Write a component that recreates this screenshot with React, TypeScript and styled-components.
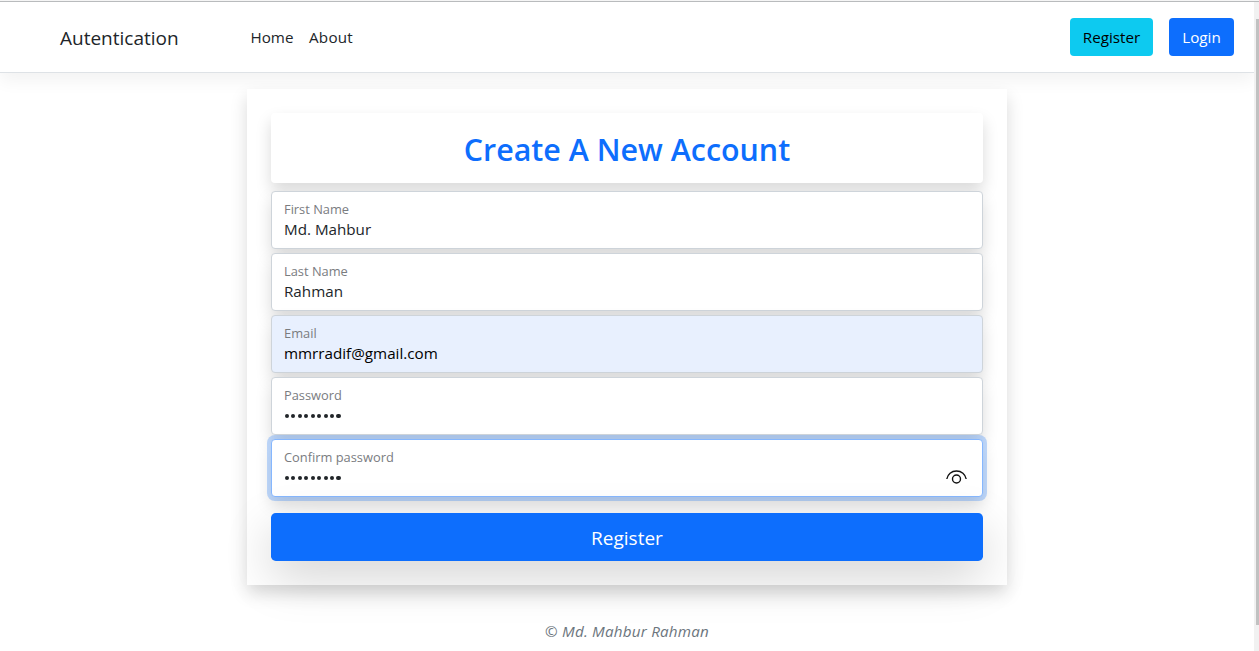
import React from "react";
import styled, { createGlobalStyle } from "styled-components";

const GlobalStyle = createGlobalStyle`
  *, *::before, *::after { box-sizing: border-box; }
  html, body { margin: 0; height: 100%; overflow: hidden; }
  body {
    font-family: "Segoe UI", "Open Sans", "Noto Sans", sans-serif;
    font-size: 15.2px;
    line-height: 24px;
    color: #212529;
    background: #fff;
  }
`;

const Window = styled.div`
  display: flex;
  height: 651px;
  border-top: 1px solid #f5f5f5;
`;

const Viewport = styled.div`
  display: flex;
  flex: 1;
  border-top: 1px solid #b9bbbd;
`;

const Page = styled.div`
  flex: 1;
  overflow: hidden;
`;

const ScrollTrack = styled.div`
  width: 5px;
  padding: 17px 0 0 2px;
  background: #f1f1f1;
`;

const ScrollThumb = styled.div`
  height: 606px;
  background: #c1c1c1;
`;

const Navbar = styled.header`
  display: flex;
  align-items: center;
  height: 71px;
  padding: 0 20px 0 60px;
  background: #fff;
  border-bottom: 1px solid #dee2e6;
  box-shadow: 0 8px 16px rgba(0, 0, 0, 0.05);
`;

const Brand = styled.a`
  width: 190.5px;
  padding-top: 2px;
  font-size: 19px;
  line-height: 30px;
`;

const NavLinks = styled.nav`
  display: flex;
  flex: 1;
  gap: 16px;
`;

const NavLink = styled.a<{ $width: number; $spacing?: number }>`
  width: ${(p) => p.$width}px;
  letter-spacing: ${(p) => p.$spacing ?? 0}px;
  white-space: nowrap;
`;

const NavActions = styled.div`
  display: flex;
  gap: 16px;
`;

const NavButton = styled.button<{ $variant: "info" | "primary" }>`
  width: ${(p) => (p.$variant === "info" ? 83 : 65)}px;
  height: 38px;
  padding: 0;
  border: 0;
  border-radius: 4px;
  font: inherit;
  color: ${(p) => (p.$variant === "info" ? "#000" : "#fff")};
  background: ${(p) => (p.$variant === "info" ? "#0dcaf0" : "#0d6efd")};
`;

const Card = styled.main`
  width: 760px;
  margin: 16px auto 0;
  padding: 24px;
  background: #fff;
  box-shadow: 0 8px 16px rgba(0, 0, 0, 0.15);
`;

const Title = styled.h2`
  margin: 0 0 8px;
  padding: 18px 0 14px;
  border-radius: 4px;
  font-size: 30.4px;
  line-height: 38.4px;
  font-weight: 600;
  text-align: center;
  color: #0d6efd;
  background: #fff;
  box-shadow: 0 8px 16px rgba(0, 0, 0, 0.15);
`;

const FieldList = styled.form`
  display: flex;
  flex-direction: column;
  gap: 4px;
`;

const FieldBox = styled.label<{ $filled?: boolean; $focused?: boolean }>`
  display: flex;
  align-items: center;
  height: 58px;
  padding: 0 14px 2px 12px;
  border: 1px solid ${(p) => (p.$focused ? "#86b7fe" : "#ced4da")};
  border-radius: 4px;
  color: ${(p) => (p.$filled ? "#000" : "#212529")};
  background: ${(p) => (p.$filled ? "#e8f0fe" : "#fff")};
  box-shadow: ${(p) => (p.$focused ? "0 0 0 4px rgba(13, 110, 253, 0.25), " : "")}0 8px 16px rgba(0, 0, 0, 0.15);
`;

const FieldText = styled.span`
  display: flex;
  flex: 1;
  flex-direction: column;
`;

const FieldLabel = styled.span`
  font-size: 12.85px;
  line-height: 20px;
  color: #7a7c7f;
`;

const FieldValue = styled.span`
  line-height: 20px;
`;

const Dots = styled.span`
  display: flex;
  align-items: center;
  gap: 2.1px;
  height: 20px;
  padding: 1px 0 0 0.6px;
`;

const Dot = styled.i`
  width: 4.4px;
  height: 4.4px;
  border-radius: 50%;
  background: #212529;
`;

const Submit = styled.button`
  width: 100%;
  height: 48px;
  margin-top: 12px;
  padding: 2px 0 0;
  border: 0;
  border-radius: 4.8px;
  font: inherit;
  font-size: 19px;
  color: #fff;
  background: #0d6efd;
  box-shadow: 0 16px 48px rgba(0, 0, 0, 0.175);
`;

const Footer = styled.footer`
  margin-top: 34px;
  text-align: center;
  font-style: italic;
  letter-spacing: 0.22px;
  color: #6c757d;
`;

const EyeSvg = styled.svg`
  margin: 19px 1px 0 0;
`;

const EyeIcon = () => (
  <EyeSvg width="21" height="16" viewBox="0 0 21 16" fill="none" stroke="#111" strokeWidth="1.4">
    <path d="M0.8 10C1.6 5.3 5.5 2 10.5 2s8.9 3.3 9.7 8" />
    <circle cx="10.5" cy="10" r="4" />
  </EyeSvg>
);

const fields = [
  { label: "First Name", value: "Md. Mahbur" },
  { label: "Last Name", value: "Rahman" },
  { label: "Email", value: "mmrradif@gmail.com", filled: true },
  { label: "Password", secret: 9 },
  { label: "Confirm password", secret: 9, focused: true },
];

export default function App() {
  return (
    <Window>
      <GlobalStyle />
      <Viewport>
        <Page>
          <Navbar>
            <Brand>Autentication</Brand>
            <NavLinks>
              <NavLink $width={42.5}>Home</NavLink>
              <NavLink $width={44} $spacing={0.25}>
                About
              </NavLink>
            </NavLinks>
            <NavActions>
              <NavButton $variant="info">Register</NavButton>
              <NavButton $variant="primary">Login</NavButton>
            </NavActions>
          </Navbar>
          <Card>
            <Title>Create A New Account</Title>
            <FieldList>
              {fields.map((f) => (
                <FieldBox key={f.label} $filled={f.filled} $focused={f.focused}>
                  <FieldText>
                    <FieldLabel>{f.label}</FieldLabel>
                    {f.secret ? (
                      <Dots>
                        {Array.from({ length: f.secret }, (_, i) => (
                          <Dot key={i} />
                        ))}
                      </Dots>
                    ) : (
                      <FieldValue>{f.value}</FieldValue>
                    )}
                  </FieldText>
                  {f.focused && <EyeIcon />}
                </FieldBox>
              ))}
              <Submit type="button">Register</Submit>
            </FieldList>
          </Card>
          <Footer>© Md. Mahbur Rahman</Footer>
        </Page>
        <ScrollTrack>
          <ScrollThumb />
        </ScrollTrack>
      </Viewport>
    </Window>
  );
}
